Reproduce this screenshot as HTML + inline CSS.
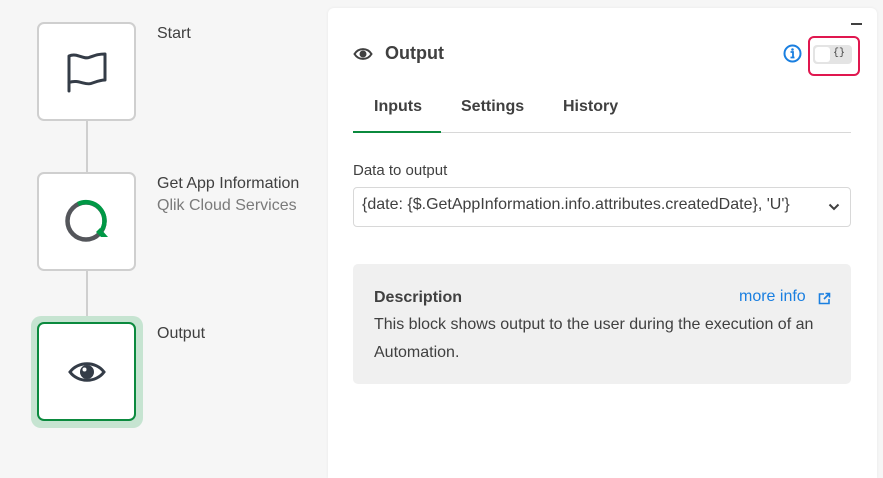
<!DOCTYPE html>
<html><head><style>
body{margin:0;width:883px;height:471px;background:#f6f6f6;font-family:"Liberation Sans",sans-serif;position:relative;overflow:hidden;color:#404040}
.node{position:absolute;left:37px;width:99px;height:99px;background:#fff;border:2px solid #cfcfcf;border-radius:7px;box-sizing:border-box;display:flex;align-items:center;justify-content:center}
.line{position:absolute;left:86px;width:2px;background:#cfcfcf}
.lbl{position:absolute;left:157px;font-size:16px;color:#404040}
.panel{position:absolute;left:328px;top:8px;width:549px;height:470px;background:#fff;border-radius:6px 6px 0 0;box-shadow:0 0 3px rgba(0,0,0,.06)}
.abs{position:absolute}
</style></head><body>
<div class="line" style="top:120px;height:52px"></div>
<div class="line" style="top:270px;height:52px"></div>
<div class="node" style="top:22px"><svg width="44" height="44" viewBox="0 0 44 44" style="flex:none"><path d="M4 41V6c8-3.5 14 3.5 20 1.5S33 4 40 4v26c-5 0-8 1.5-14 3.5-6 2-13-4.5-22-1" fill="none" stroke="#343c47" stroke-width="3" stroke-linejoin="round" stroke-linecap="round"/></svg></div>
<div class="node" style="top:172px"><svg width="48" height="48" viewBox="0 0 48 48" style="flex:none"><circle cx="23" cy="23" r="18.5" fill="none" stroke="#54565b" stroke-width="4.5"/><path d="M15 6A18.5 18.5 0 0 1 39 32" fill="none" stroke="#009845" stroke-width="4.5"/><path d="M33 34l4-4 8 9h-7z" fill="#009845"/></svg></div>
<div class="abs" style="left:31px;top:316px;width:112px;height:112px;border-radius:10px;background:#c6e4d1"></div>
<div class="node" style="top:322px;border-color:#0b8a3e"><svg width="40" height="40" viewBox="0 0 40 40" style="flex:none"><path d="M3 20c8-11 26-11 34 0-8 11-26 11-34 0z" fill="none" stroke="#343c47" stroke-width="3"/><circle cx="20" cy="20" r="7" fill="#343c47"/><circle cx="17.5" cy="17.5" r="2" fill="#fff"/></svg></div>
<div class="lbl" style="top:25px">Start</div>
<div class="lbl" style="top:175px">Get App Information</div>
<div class="lbl" style="top:197px;color:#7a7a7a">Qlik Cloud Services</div>
<div class="lbl" style="top:325px">Output</div>

<div class="panel">
<div class="abs" style="left:523px;top:15px;width:11px;height:2px;background:#404040"></div>
<svg class="abs" style="left:25px;top:38px" width="20" height="16" viewBox="0 0 20 16"><path d="M1.5 8c4-6.5 13-6.5 17 0-4 6.5-13 6.5-17 0z" fill="none" stroke="#404040" stroke-width="2"/><circle cx="10" cy="8" r="3.5" fill="#404040"/></svg>
<div class="abs" style="left:57px;top:35px;font-size:18px;font-weight:bold;color:#404040">Output</div>
<svg class="abs" style="left:455px;top:36px" width="19" height="19" viewBox="0 0 19 19"><circle cx="9.5" cy="9.5" r="8" fill="none" stroke="#1a7fe0" stroke-width="2"/><circle cx="9.5" cy="5.5" r="1.3" fill="#1a7fe0"/><path d="M7.5 8h2.5v5M7.5 13.5h4" stroke="#1a7fe0" stroke-width="1.8" fill="none"/></svg>
<div class="abs" style="left:480px;top:28px;width:52px;height:40px;border:2px solid #e0174f;border-radius:6px;box-sizing:border-box"></div>
<div class="abs" style="left:485px;top:37px;width:39px;height:19px;background:#e4e4e4;border-radius:4px"></div>
<div class="abs" style="left:487px;top:39px;width:15px;height:15px;background:#fff;border-radius:3px"></div>
<div class="abs" style="left:505px;top:40px;font-size:10px;font-family:'Liberation Mono',monospace;color:#404040">{}</div>
<div class="abs" style="left:46px;top:90px;font-size:16px;font-weight:bold;color:#404040">Inputs</div>
<div class="abs" style="left:133px;top:90px;font-size:16px;font-weight:bold;color:#404040">Settings</div>
<div class="abs" style="left:235px;top:90px;font-size:16px;font-weight:bold;color:#404040">History</div>
<div class="abs" style="left:25px;top:124px;width:498px;height:1px;background:#d8d8d8"></div>
<div class="abs" style="left:25px;top:123px;width:88px;height:2px;background:#0b8a3e"></div>
<div class="abs" style="left:25px;top:154px;font-size:15px;color:#404040">Data to output</div>
<div class="abs" style="left:25px;top:179px;width:498px;height:40px;border:1px solid #d8d8d8;border-radius:4px;box-sizing:border-box"></div>
<div class="abs" style="left:34px;top:188px;font-size:16px;color:#404040;white-space:nowrap">{date: {$.GetAppInformation.info.attributes.createdDate}, 'U'}</div>
<svg class="abs" style="left:500px;top:195px" width="12" height="8"><path d="M1.5 1.5l4.5 4.5 4.5-4.5" fill="none" stroke="#404040" stroke-width="2"/></svg>
<div class="abs" style="left:25px;top:256px;width:498px;height:120px;background:#f0f0f0;border-radius:5px"></div>
<div class="abs" style="left:46px;top:281px;font-size:16px;font-weight:bold;color:#404040">Description</div>
<div class="abs" style="left:411px;top:280px;font-size:16px;color:#1a7fe0">more info</div>
<svg class="abs" style="left:490px;top:284px" width="13" height="13" viewBox="0 0 13 13"><path d="M6 2H1.5v9.5H11V7M7.5 1.5h4v4M11.5 1.5L6 7" fill="none" stroke="#1a7fe0" stroke-width="1.6"/></svg>
<div class="abs" style="left:46px;top:303px;width:475px;font-size:16px;line-height:28px;color:#404040">This block shows output to the user during the execution of an Automation.</div>
</div>
</body></html>
